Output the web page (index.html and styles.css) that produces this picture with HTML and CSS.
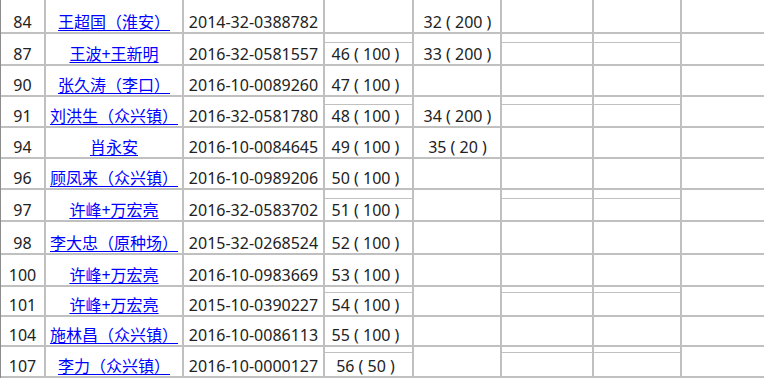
FILE: index.html
```html
<!DOCTYPE html>
<html lang="zh-CN">
<head>
<meta charset="utf-8">
<title>表格</title>
<link rel="stylesheet" href="styles.css">
</head>
<body>
<div class="sheet">
  <!-- row 84 -->
  <div class="cell num">84</div>
  <div class="cell name"><a href="#">王超国（淮安）</a></div>
  <div class="cell date">2014-32-0388782</div>
  <div class="cell qty"></div>
  <div class="cell qty2">32 ( 200 )</div>
  <div class="cell"></div>
  <div class="cell"></div>
  <div class="cell"></div>
  <!-- row 87 -->
  <div class="cell num">87</div>
  <div class="cell name"><a href="#">王波+王新明</a></div>
  <div class="cell date">2016-32-0581557</div>
  <div class="cell qty split s8"><span class="inner">46 ( 100 )</span></div>
  <div class="cell qty2">33 ( 200 )</div>
  <div class="cell split s8"><span class="inner"></span></div>
  <div class="cell split s8"><span class="inner"></span></div>
  <div class="cell"></div>
  <!-- row 90 -->
  <div class="cell num">90</div>
  <div class="cell name"><a href="#">张久涛（李口）</a></div>
  <div class="cell date">2016-10-0089260</div>
  <div class="cell qty">47 ( 100 )</div>
  <div class="cell qty2"></div>
  <div class="cell"></div>
  <div class="cell"></div>
  <div class="cell"></div>
  <!-- row 91 -->
  <div class="cell num">91</div>
  <div class="cell name"><a href="#">刘洪生（众兴镇）</a></div>
  <div class="cell date">2016-32-0581780</div>
  <div class="cell qty split s7"><span class="inner">48 ( 100 )</span></div>
  <div class="cell qty2">34 ( 200 )</div>
  <div class="cell split s7"><span class="inner"></span></div>
  <div class="cell split s7"><span class="inner"></span></div>
  <div class="cell"></div>
  <!-- row 94 -->
  <div class="cell num">94</div>
  <div class="cell name"><a href="#">肖永安</a></div>
  <div class="cell date">2016-10-0084645</div>
  <div class="cell qty">49 ( 100 )</div>
  <div class="cell qty2">35 ( 20 )</div>
  <div class="cell"></div>
  <div class="cell"></div>
  <div class="cell"></div>
  <!-- row 96 -->
  <div class="cell num">96</div>
  <div class="cell name"><a href="#">顾凤来（众兴镇）</a></div>
  <div class="cell date">2016-10-0989206</div>
  <div class="cell qty">50 ( 100 )</div>
  <div class="cell qty2"></div>
  <div class="cell"></div>
  <div class="cell"></div>
  <div class="cell"></div>
  <!-- row 97 -->
  <div class="cell num">97</div>
  <div class="cell name"><a href="#">许峰+万宏亮</a></div>
  <div class="cell date">2016-32-0583702</div>
  <div class="cell qty split s8"><span class="inner">51 ( 100 )</span></div>
  <div class="cell qty2"></div>
  <div class="cell split s8"><span class="inner"></span></div>
  <div class="cell split s8"><span class="inner"></span></div>
  <div class="cell"></div>
  <!-- row 98 -->
  <div class="cell num">98</div>
  <div class="cell name"><a href="#">李大忠（原种场）</a></div>
  <div class="cell date">2015-32-0268524</div>
  <div class="cell qty">52 ( 100 )</div>
  <div class="cell qty2"></div>
  <div class="cell"></div>
  <div class="cell"></div>
  <div class="cell"></div>
  <!-- row 100 -->
  <div class="cell num">100</div>
  <div class="cell name"><a href="#">许峰+万宏亮</a></div>
  <div class="cell date">2016-10-0983669</div>
  <div class="cell qty">53 ( 100 )</div>
  <div class="cell qty2"></div>
  <div class="cell"></div>
  <div class="cell"></div>
  <div class="cell"></div>
  <!-- row 101 -->
  <div class="cell num">101</div>
  <div class="cell name"><a href="#">许峰+万宏亮</a></div>
  <div class="cell date">2015-10-0390227</div>
  <div class="cell qty split s5"><span class="inner">54 ( 100 )</span></div>
  <div class="cell qty2"></div>
  <div class="cell split s5"><span class="inner"></span></div>
  <div class="cell split s5"><span class="inner"></span></div>
  <div class="cell"></div>
  <!-- row 104 -->
  <div class="cell num">104</div>
  <div class="cell name"><a href="#">施林昌（众兴镇）</a></div>
  <div class="cell date">2016-10-0086113</div>
  <div class="cell qty">55 ( 100 )</div>
  <div class="cell qty2"></div>
  <div class="cell"></div>
  <div class="cell"></div>
  <div class="cell"></div>
  <!-- row 107 -->
  <div class="cell num">107</div>
  <div class="cell name"><a href="#">李力（众兴镇）</a></div>
  <div class="cell date">2016-10-0000127</div>
  <div class="cell qty split s5"><span class="inner">56 ( 50 )</span></div>
  <div class="cell qty2"></div>
  <div class="cell split s5"><span class="inner"></span></div>
  <div class="cell split s5"><span class="inner"></span></div>
  <div class="cell"></div>
</div>
</body>
</html>
```
FILE: styles.css
```css
html, body {
  margin: 0;
  padding: 0;
  background: #ffffff;
  overflow: hidden;
}

.sheet {
  display: grid;
  grid-template-columns: 45px 138px 141px 89px 88px 92px 88px 100px;
  grid-template-rows: 34px 32px 31px 31px 31px 31px 32px 33px 32px 30px 30px 31px;
  border-left: 1px solid #8c8c8c;
  width: max-content;
  font-family: "Noto Sans", "Noto Sans CJK SC", sans-serif;
  font-size: 16px;
  line-height: 20px;
  color: #222222;
}

.cell {
  box-sizing: border-box;
  border-right: 2px solid #c0c0c0;
  border-bottom: 2px solid #c0c0c0;
  display: flex;
  align-items: flex-end;
  justify-content: center;
  white-space: nowrap;
  overflow: hidden;
}

.name a {
  color: #0000ff;
  text-decoration: underline;
  text-underline-offset: 2px;
}

.qty {
  padding-right: 6px;
}

.qty2 {
  padding-left: 1px;
}

.split {
  flex-direction: column;
  align-items: stretch;
  justify-content: flex-start;
  padding-right: 0;
}

.split .inner {
  flex: 1;
  border-top: 1px solid #c0c0c0;
  display: flex;
  align-items: flex-end;
  justify-content: center;
}

.qty.split .inner {
  padding-right: 6px;
}

.s8 { padding-top: 8px; }
.s7 { padding-top: 7px; }
.s5 { padding-top: 5px; }
```
